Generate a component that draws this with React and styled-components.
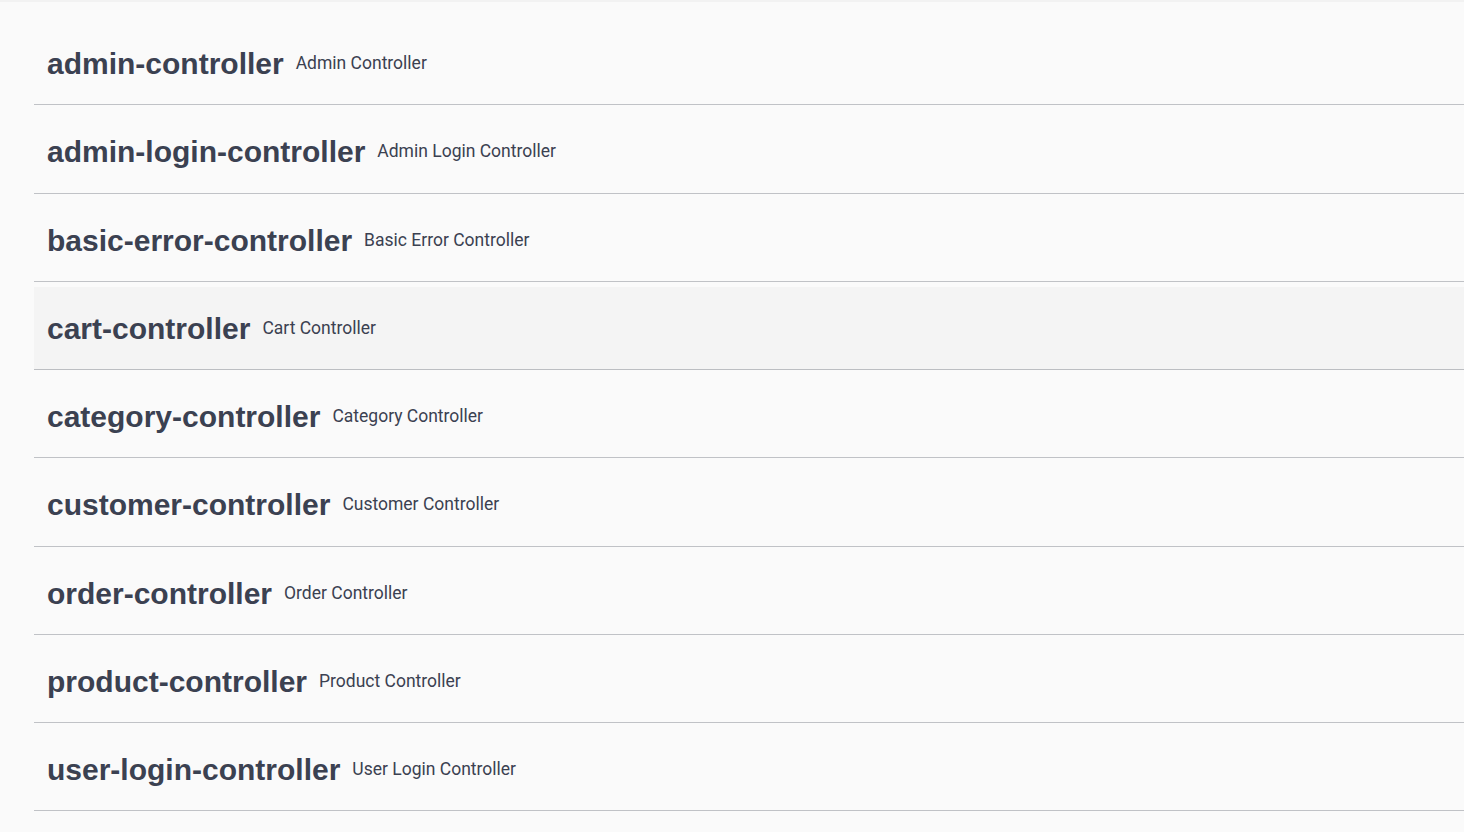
import React from "react";
import styled, { createGlobalStyle } from "styled-components";

const GlobalStyle = createGlobalStyle`
  html, body {
    margin: 0;
    padding: 0;
    background: #fafafa;
  }
  body {
    font-family: "Liberation Sans", Arial, sans-serif;
    color: #3b4151;
  }
`;

const Page = styled.div`
  min-height: 832px;
  background: #fafafa;
  border-top: 2px solid #f2f2f2;
  padding: 20px 0 0 34px;
  box-sizing: border-box;
  overflow: hidden;
`;

const TagSection = styled.section`
  display: flex;
  flex-direction: column;
`;

const TagRow = styled.h3`
  display: flex;
  align-items: center;
  box-sizing: border-box;
  height: 83.25px;
  margin: 0 0 5px;
  padding: 0 20px 0 13px;
  border-bottom: 1px solid rgba(59, 65, 81, 0.3);
  background: ${(p) => (p.$active ? "#f4f4f4" : "transparent")};
  cursor: pointer;
`;

const TagName = styled.span`
  font-family: "Liberation Sans", Arial, sans-serif;
  font-size: 30px;
  font-weight: 700;
  line-height: 1.2;
  color: #3b4151;
  white-space: nowrap;
  margin-top: 2px;
`;

const TagDesc = styled.small`
  font-family: Roboto, "Liberation Sans", sans-serif;
  font-size: 17.5px;
  font-weight: 400;
  color: #3b4151;
  padding: 0 12px;
  white-space: nowrap;
`;

const tags = [
  ["admin-controller", "Admin Controller"],
  ["admin-login-controller", "Admin Login Controller"],
  ["basic-error-controller", "Basic Error Controller"],
  ["cart-controller", "Cart Controller"],
  ["category-controller", "Category Controller"],
  ["customer-controller", "Customer Controller"],
  ["order-controller", "Order Controller"],
  ["product-controller", "Product Controller"],
  ["user-login-controller", "User Login Controller"],
];

const App = () => {
  return (
    <>
      <GlobalStyle />
      <Page>
        <TagSection>
          {tags.map(([name, desc]) => (
            <TagRow key={name} $active={name === "cart-controller"}>
              <TagName>{name}</TagName>
              <TagDesc>{desc}</TagDesc>
            </TagRow>
          ))}
        </TagSection>
      </Page>
    </>
  );
};

export default App;
